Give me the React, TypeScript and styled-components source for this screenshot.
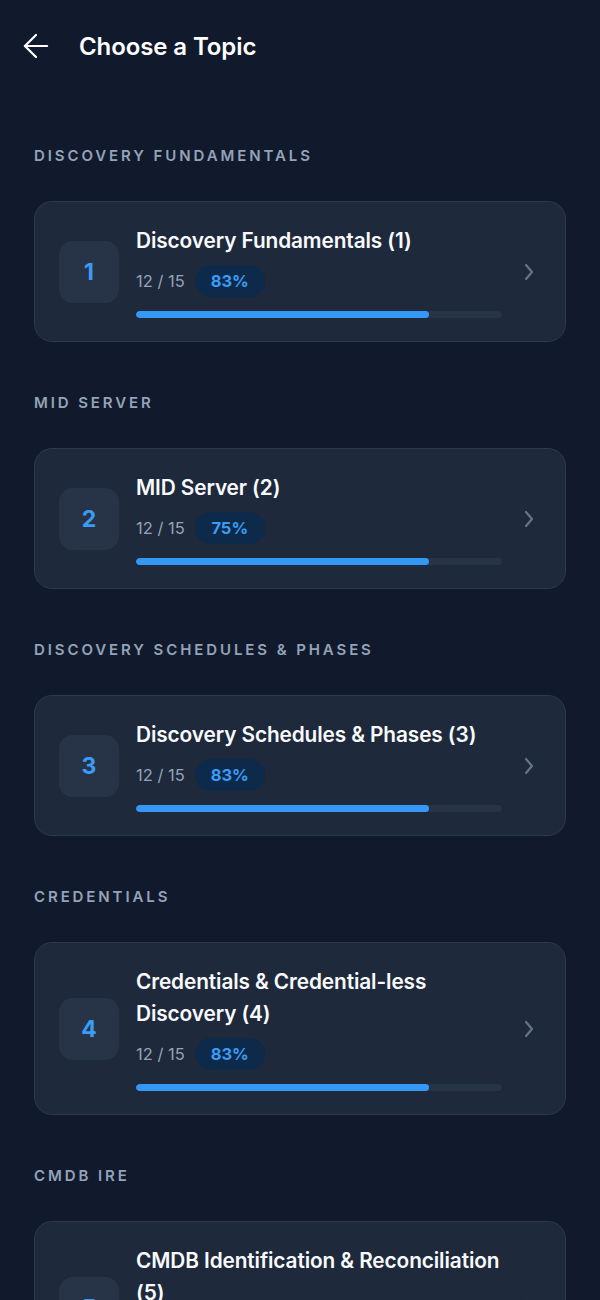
import styled, { createGlobalStyle } from 'styled-components'

// data
interface Topic {
  section: string
  title: string
  done: number
  total: number
  percent: number
}

const topics: Topic[] = [
  { section: 'Discovery Fundamentals', title: 'Discovery Fundamentals (1)', done: 12, total: 15, percent: 83 },
  { section: 'MID Server', title: 'MID Server (2)', done: 12, total: 15, percent: 75 },
  { section: 'Discovery Schedules & Phases', title: 'Discovery Schedules & Phases (3)', done: 12, total: 15, percent: 83 },
  { section: 'Credentials', title: 'Credentials & Credential-less Discovery (4)', done: 12, total: 15, percent: 83 },
  { section: 'CMDB IRE', title: 'CMDB Identification & Reconciliation (5)', done: 12, total: 15, percent: 83 },
]

// styled
const GlobalStyle = createGlobalStyle`
  html, body {
    margin: 0;
    padding: 0;
    background: #111a2c;
  }
  body {
    font-family: Inter, 'Noto Sans', 'Liberation Sans', sans-serif;
    color: #f8fafc;
  }
`

const Page = styled.div`
  min-height: 1300px;
  background: #111a2c;
  padding: 0 34px 40px;
  box-sizing: border-box;
`

const Header = styled.header`
  display: flex;
  align-items: center;
  gap: 24px;
  height: 92px;
  margin-left: -17px;

  h1 {
    margin: 0;
    font-size: 24px;
    font-weight: 600;
    letter-spacing: -0.1px;
    color: #ffffff;
  }
`

const BackButton = styled.button`
  display: flex;
  align-items: center;
  justify-content: center;
  width: 38px;
  height: 38px;
  padding: 0;
  border: none;
  background: none;
  color: #ffffff;
`

const Section = styled.section`
  display: flex;
  flex-direction: column;
  gap: 35px;
  padding-top: 54px;

  & + & {
    padding-top: 51px;
  }
`

const SectionLabel = styled.h2`
  margin: 0;
  font-size: 15px;
  line-height: 20px;
  font-weight: 600;
  letter-spacing: 2.9px;
  text-transform: uppercase;
  color: #94a3b8;
`

const Card = styled.div`
  display: flex;
  align-items: center;
  gap: 17px;
  padding: 23px 24px;
  border-radius: 18px;
  border: 1px solid #2d3a4e;
  background: #1e293b;
`

const NumberBox = styled.div`
  flex: 0 0 60px;
  height: 62px;
  display: flex;
  align-items: center;
  justify-content: center;
  border-radius: 14px;
  background: #273448;
  color: #3b9cf6;
  font-size: 23px;
  font-weight: 700;
`

const Body = styled.div`
  flex: 1;
  min-width: 0;
  display: flex;
  flex-direction: column;
`

const Title = styled.div`
  font-size: 20.8px;
  line-height: 32px;
  font-weight: 600;
  color: #f8fafc;
  letter-spacing: -0.1px;
`

const Stats = styled.div`
  display: flex;
  align-items: center;
  gap: 10px;
  margin-top: 8px;
  font-size: 16.5px;
  color: #94a3b8;
`

const Pill = styled.span`
  display: inline-flex;
  align-items: center;
  justify-content: center;
  width: 70px;
  height: 32px;
  border-radius: 16px;
  background: #0d2a4a;
  color: #3b9cf6;
  font-size: 16.5px;
  font-weight: 700;
`

const Track = styled.div`
  margin-top: 14px;
  height: 7px;
  border-radius: 4px;
  background: #273448;
  overflow: hidden;
`

const Fill = styled.div`
  height: 100%;
  border-radius: 4px;
  background: #3399f5;
`

const Chevron = styled.div`
  flex: 0 0 20px;
  display: flex;
  justify-content: center;
  margin-right: 2px;
  color: #64748b;
`

// component
const App = () => {
  return (
    <>
      <GlobalStyle />
      <Page>
        <Header>
          <BackButton type='button' aria-label='Back'>
            <svg width='38' height='38' viewBox='0 0 24 24' fill='none' stroke='currentColor' strokeWidth='1.4' strokeLinecap='round' strokeLinejoin='round'>
              <path d='M19 12H5' />
              <path d='M12 19l-7-7 7-7' />
            </svg>
          </BackButton>
          <h1>Choose a Topic</h1>
        </Header>
        {topics.map((t, i) => (
          <Section key={t.title}>
            <SectionLabel>{t.section}</SectionLabel>
            <Card>
              <NumberBox>{i + 1}</NumberBox>
              <Body>
                <Title>{t.title}</Title>
                <Stats>
                  <span>
                    {t.done} / {t.total}
                  </span>
                  <Pill>{t.percent}%</Pill>
                </Stats>
                <Track>
                  <Fill style={{ width: `${(t.done / t.total) * 100}%` }} />
                </Track>
              </Body>
              <Chevron>
                <svg width='12' height='18' viewBox='0 0 12 18' fill='none' stroke='currentColor' strokeWidth='2.2' strokeLinecap='round' strokeLinejoin='round'>
                  <path d='M3 2l6 7-6 7' />
                </svg>
              </Chevron>
            </Card>
          </Section>
        ))}
      </Page>
    </>
  )
}

export default App
